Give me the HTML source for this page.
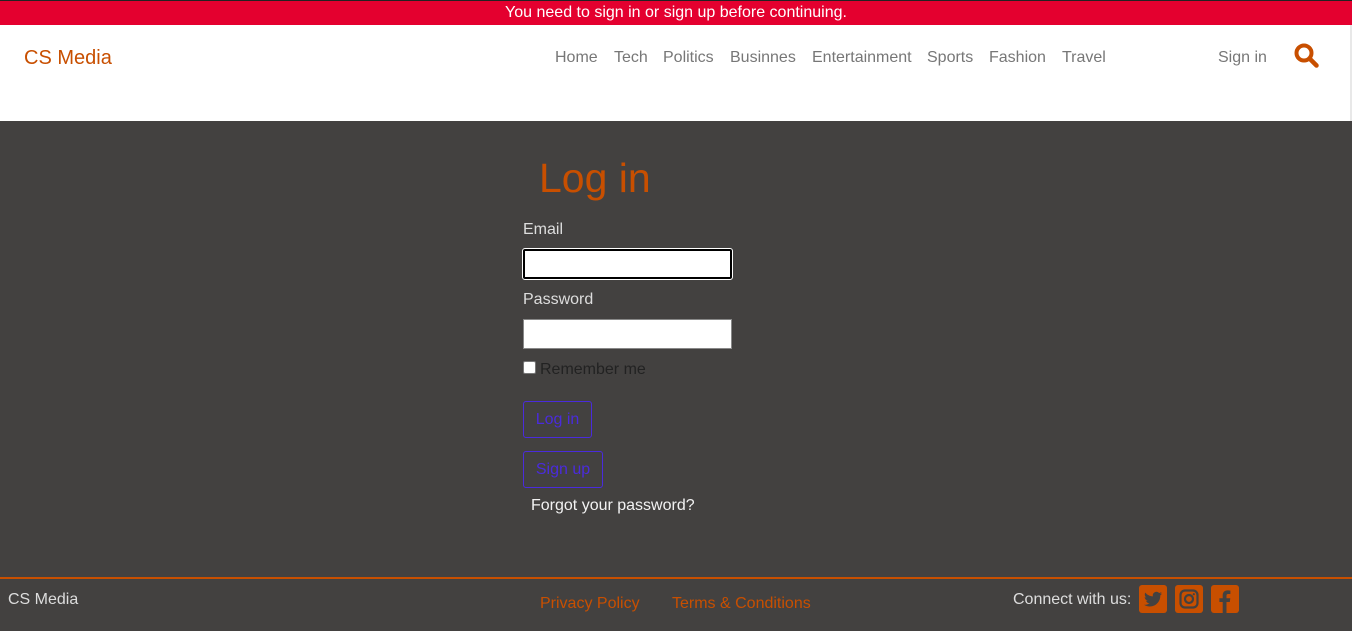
<!DOCTYPE html>
<html><head><meta charset="utf-8"><style>
*{margin:0;padding:0;box-sizing:border-box}
body{width:1352px;height:631px;overflow:hidden;background:#434140;font-family:"Liberation Sans",sans-serif;position:relative}
.abs{position:absolute;white-space:nowrap}
#top{position:absolute;left:0;top:0;width:1352px;height:25px;background:#e4002f;border-top:1px solid #222;color:#fff;font-size:16px;text-align:center;line-height:24px}
#hdr{position:absolute;left:0;top:25px;width:1352px;height:96px;background:#fff;border-right:2px solid #e8e8e8}
.nav{color:#777;font-size:16px;top:49px}
.or{color:#c84f00}
input.f{position:absolute;left:523px;width:209px;height:30px;background:#fff;border:1px solid #888}
.btn{position:absolute;left:523px;border:1px solid #4a2bdc;border-radius:3px;color:#4a2bdc;font-size:16px;line-height:36px;text-align:center;height:37px}
.ic{position:absolute;top:585px;width:28px;height:28px;background:#c84f00;border-radius:3px}
</style></head><body>
<div id="top">You need to sign in or sign up before continuing.</div>
<div id="hdr"></div>
<div class="abs or" style="left:24px;top:47px;font-size:20px">CS Media</div>
<div class="abs nav" style="left:555px">Home</div>
<div class="abs nav" style="left:614px">Tech</div>
<div class="abs nav" style="left:663px">Politics</div>
<div class="abs nav" style="left:730px">Businnes</div>
<div class="abs nav" style="left:812px">Entertainment</div>
<div class="abs nav" style="left:927px">Sports</div>
<div class="abs nav" style="left:989px">Fashion</div>
<div class="abs nav" style="left:1062px">Travel</div>
<div class="abs nav" style="left:1218px">Sign in</div>
<svg class="abs" style="left:1294px;top:43px" width="26" height="26" viewBox="0 0 26 26"><circle cx="10" cy="10" r="7.5" fill="none" stroke="#c84f00" stroke-width="4"/><line x1="15.5" y1="15.5" x2="22.5" y2="22.5" stroke="#c84f00" stroke-width="4.5" stroke-linecap="round"/></svg>
<div class="abs or" style="left:539px;top:155px;font-size:41px">Log in</div>
<div class="abs" style="left:523px;top:221px;color:#ddd;font-size:16px">Email</div>
<input class="f" style="top:249px;border:2px solid #000;outline:1px solid #fff;border-radius:2px">
<div class="abs" style="left:523px;top:291px;color:#ddd;font-size:16px">Password</div>
<input class="f" style="top:319px">
<div class="abs" style="left:523px;top:361px;width:13px;height:13px;background:#fff;border:1px solid #777;border-radius:2px"></div>
<div class="abs" style="left:540px;top:361px;color:#222;font-size:16px">Remember me</div>
<div class="btn" style="top:401px;width:69px">Log in</div>
<div class="btn" style="top:451px;width:80px">Sign up</div>
<div class="abs" style="left:531px;top:497px;color:#f2f2f2;font-size:16px">Forgot your password?</div>
<div class="abs" style="left:0;top:577px;width:1352px;height:2px;background:#c84f00"></div>
<div class="abs" style="left:8px;top:591px;color:#ddd;font-size:16px">CS Media</div>
<div class="abs or" style="left:540px;top:595px;font-size:16px">Privacy Policy</div>
<div class="abs or" style="left:672px;top:595px;font-size:16px">Terms &amp; Conditions</div>
<div class="abs" style="left:1013px;top:591px;color:#ddd;font-size:16px">Connect with us:</div>
<div class="ic" style="left:1139px"><svg width="28" height="28" viewBox="0 0 28 28"><path d="M23 8.5c-.7.3-1.4.5-2.1.6.8-.5 1.3-1.2 1.6-2-.7.4-1.5.7-2.3.9a3.7 3.7 0 0 0-6.3 3.4C10.8 11.2 8.1 9.8 6.3 7.6c-1 1.7-.5 3.8 1.1 4.9-.6 0-1.2-.2-1.7-.5 0 1.800 1.3 3.3 3 3.6-.5.2-1.1.2-1.7.1.5 1.5 1.9 2.5 3.5 2.6A7.5 7.5 0 0 1 5 19.8c1.7 1.1 3.7 1.7 5.7 1.7 6.9 0 10.8-5.8 10.6-11.1.7-.5 1.3-1.1 1.700-1.9z" fill="#434140"/></svg></div>
<div class="ic" style="left:1175px"><svg width="28" height="28" viewBox="0 0 28 28"><rect x="5.5" y="5.5" width="17" height="17" rx="4.5" fill="none" stroke="#434140" stroke-width="2.2"/><circle cx="14" cy="14" r="4" fill="none" stroke="#434140" stroke-width="2.2"/><circle cx="18.8" cy="9.2" r="1.1" fill="#434140"/></svg></div>
<div class="ic" style="left:1211px"><svg width="28" height="28" viewBox="0 0 28 28"><path d="M15.5 28V17h3.3l.5-3.8h-3.8v-2.4c0-1.1.3-1.8 1.9-1.8h2V5.6c-.4-.1-1.6-.2-2.9-.2-2.900 0-4.8 1.7-4.8 4.9v2.9H8.4V17h3.3v11z" fill="#434140"/></svg></div>
</body></html>
